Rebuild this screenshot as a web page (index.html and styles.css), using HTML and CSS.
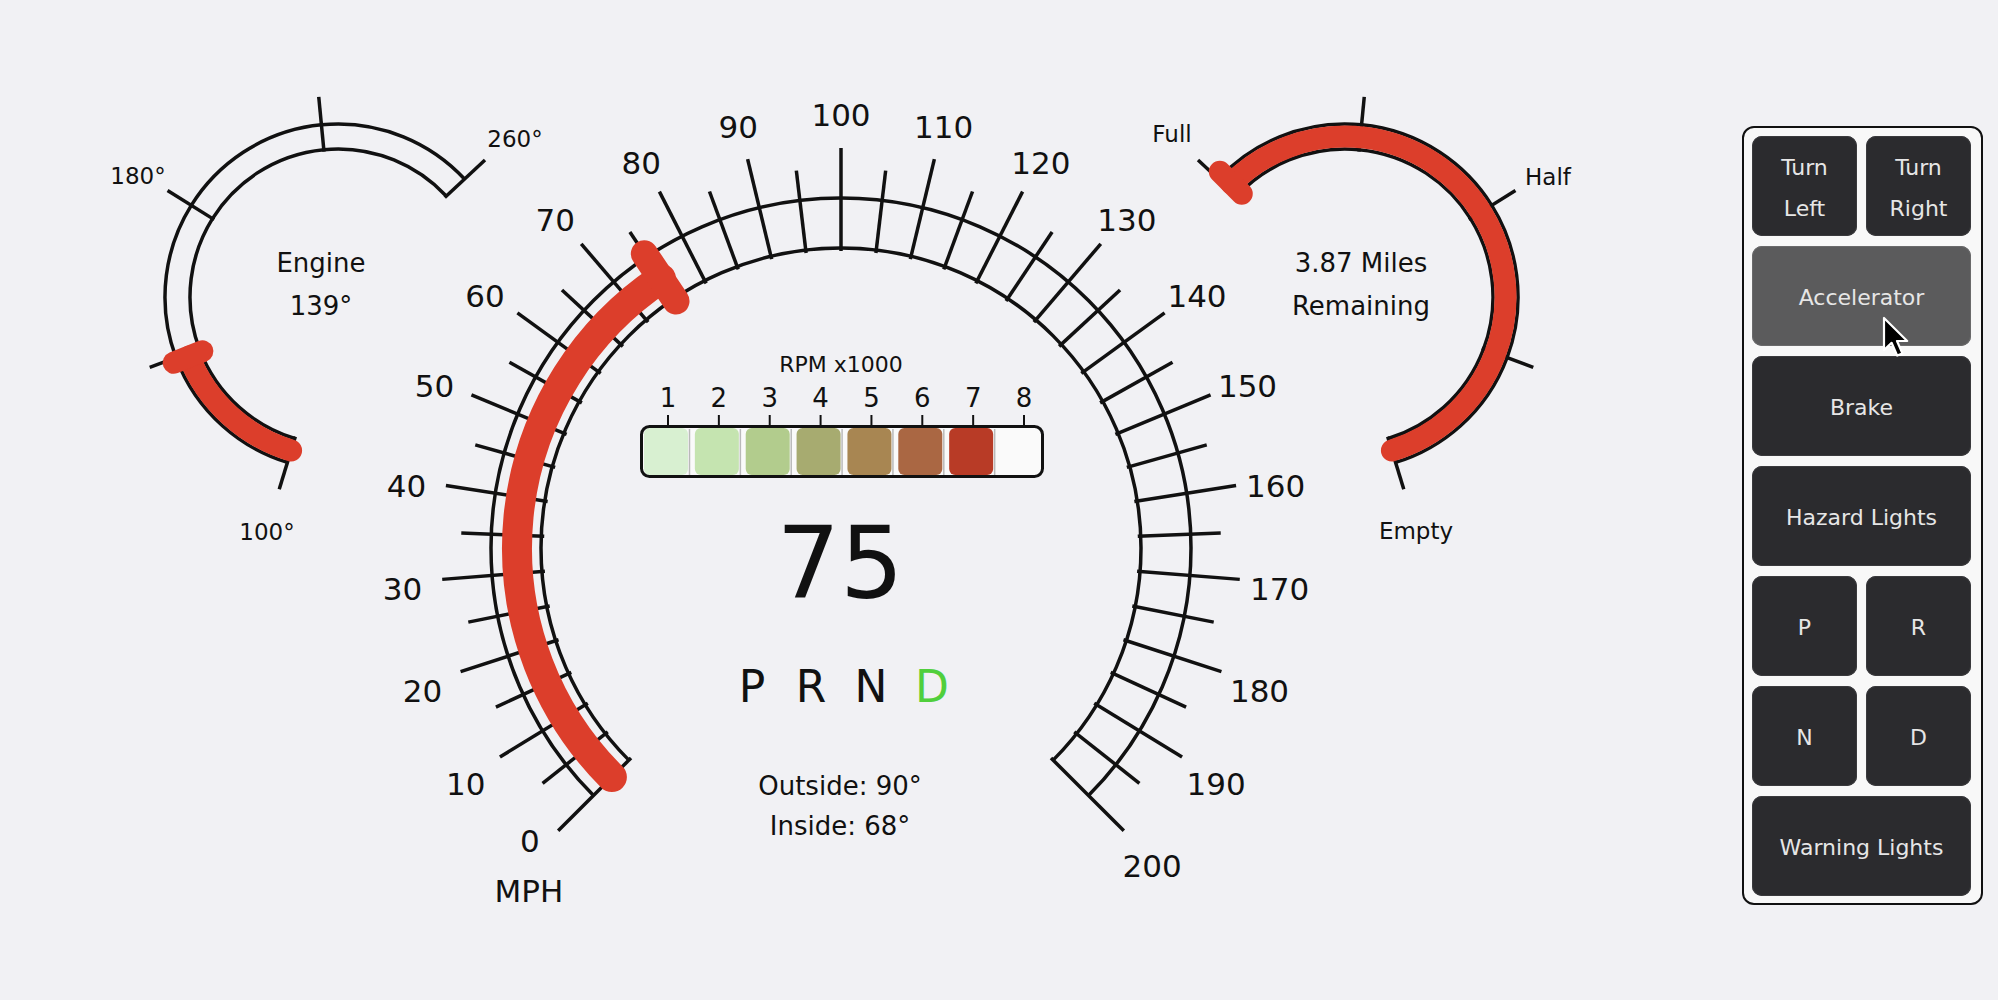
FILE: index.html
```html
<!DOCTYPE html>
<html lang="en">
<head>
<meta charset="utf-8">
<title>Car Dashboard</title>
<link rel="stylesheet" href="styles.css">
</head>
<body>
<div class="app">
  <svg class="dash" id="dash" width="1742" height="1000" viewBox="0 0 1742 1000">
    <g id="engine"></g>
    <g id="fuel"></g>
    <g id="speed"></g>
    <g id="speed-labels"></g>
    <g id="rpm"></g>

    <text class="t t-label" x="321" y="272">Engine</text>
    <text class="t t-label" x="321" y="315">139°</text>
    <text class="t t-small" x="138" y="184">180°</text>
    <text class="t t-small" x="515" y="147">260°</text>
    <text class="t t-small" x="267" y="540">100°</text>

    <text class="t t-label" x="1361" y="272">3.87 Miles</text>
    <text class="t t-label" x="1361" y="315">Remaining</text>
    <text class="t t-small" x="1172" y="142">Full</text>
    <text class="t t-small" x="1548" y="185">Half</text>
    <text class="t t-small" x="1416" y="539">Empty</text>

    <text class="t t-rpm-title" x="841" y="372">RPM x1000</text>
    <text class="t t-speed" x="840" y="598">75</text>
    <text class="t t-gear" x="752" y="702">P</text>
    <text class="t t-gear" x="811" y="702">R</text>
    <text class="t t-gear" x="871" y="702">N</text>
    <text class="t t-gear gear-on" x="932" y="702">D</text>
    <text class="t t-label" x="840" y="795">Outside: 90°</text>
    <text class="t t-label" x="840" y="835">Inside: 68°</text>
    <text class="t t-mph" x="529" y="902">MPH</text>
  </svg>

  <div class="panel">
    <div class="btn">Turn<br>Left</div>
    <div class="btn">Turn<br>Right</div>
    <div class="btn wide active">Accelerator</div>
    <div class="btn wide">Brake</div>
    <div class="btn wide">Hazard Lights</div>
    <div class="btn">P</div>
    <div class="btn">R</div>
    <div class="btn">N</div>
    <div class="btn">D</div>
    <div class="btn wide">Warning Lights</div>
  </div>
</div>

<svg class="cursor" width="30" height="44" viewBox="0 0 15 22">
  <path d="M1 1 L1 17 L4.8 13.4 L7.6 19.8 L10.2 18.7 L7.5 12.5 L12.6 12.5 Z" class="cursor-arrow"/>
</svg>

<script src="script.js"></script>
</body>
</html>
```

FILE: styles.css
```css
html, body {
  margin: 0;
  padding: 0;
}

body {
  width: 1998px;
  height: 1000px;
  overflow: hidden;
  background: #f1f1f4;
  font-family: "DejaVu Sans", Verdana, sans-serif;
  position: relative;
}

.app {
  display: flex;
  align-items: flex-start;
}

.dash {
  display: block;
  flex: none;
}

/* gauge drawing */
.ring {
  fill: none;
  stroke: #111;
  stroke-width: 3.5;
}

.tick {
  stroke: #111;
  stroke-width: 3.5;
}

.needle {
  fill: none;
  stroke: #dc3e2b;
  stroke-linecap: round;
}

.needle-main { stroke-width: 30; }
.needle-cap { stroke-width: 27; }
.needle-sm { stroke-width: 22; }

.rpm-back {
  fill: #fafafa;
  stroke: none;
}

.rpm-frame {
  fill: none;
  stroke: #111;
  stroke-width: 3;
}

.rpm-gap {
  stroke: #b9b9b9;
  stroke-width: 1.5;
}

.rpm-tick {
  stroke: #111;
  stroke-width: 2;
}

/* text */
.t {
  font-family: "DejaVu Sans", Verdana, sans-serif;
  fill: #111;
  text-anchor: middle;
}

.t-scale { font-size: 31px; }
.t-small { font-size: 23px; }
.t-label { font-size: 26px; }
.t-rpm-title { font-size: 22px; }
.t-rpm-num { font-size: 26px; }
.t-speed { font-size: 100px; }
.t-gear { font-size: 44px; }
.t-mph { font-size: 31px; }
.gear-on { fill: #50cf3c; }

/* control panel */
.panel {
  margin-top: 126px;
  width: 219px;
  padding: 8px 10px 7px 8px;
  border: 2px solid #111;
  border-radius: 12px;
  background: #f8f8f8;
  display: grid;
  grid-template-columns: 1fr 1fr;
  grid-auto-rows: 100px;
  gap: 10px 9px;
  flex: none;
}

.btn {
  display: flex;
  align-items: center;
  justify-content: center;
  text-align: center;
  padding-top: 3px;
  box-sizing: border-box;
  border-radius: 10px;
  background: #2b2b2e;
  color: #e6e6e6;
  font-family: "DejaVu Sans", Verdana, sans-serif;
  font-size: 22px;
  line-height: 41px;
  box-shadow: inset 0 0 0 1px #3a3a3d;
}

.wide {
  grid-column: span 2;
}

.active {
  background: #5b5b5c;
  box-shadow: inset 0 0 0 1px #6a6a6b;
}

.cursor {
  position: absolute;
  left: 1882px;
  top: 316px;
}

.cursor-arrow {
  fill: #000;
  stroke: #fff;
  stroke-width: 1.1;
  stroke-linejoin: round;
}
```

FILE: script.js
```js
(function () {
  var NS = 'http://www.w3.org/2000/svg';

  function el(parent, tag, attrs, cls, text) {
    var e = document.createElementNS(NS, tag);
    for (var k in attrs) e.setAttribute(k, attrs[k]);
    if (cls) e.setAttribute('class', cls);
    if (text != null) e.textContent = text;
    parent.appendChild(e);
    return e;
  }

  function pt(cx, cy, r, deg) {
    var a = deg * Math.PI / 180;
    return [cx + r * Math.cos(a), cy - r * Math.sin(a)];
  }

  /* arc drawn clockwise on screen from math-angle a0 down to a1 (a0 > a1) */
  function arc(cx, cy, r, a0, a1) {
    var p0 = pt(cx, cy, r, a0), p1 = pt(cx, cy, r, a1);
    var large = (a0 - a1) > 180 ? 1 : 0;
    return 'M' + p0[0].toFixed(2) + ' ' + p0[1].toFixed(2) +
      ' A' + r + ' ' + r + ' 0 ' + large + ' 1 ' +
      p1[0].toFixed(2) + ' ' + p1[1].toFixed(2);
  }

  function radial(g, cx, cy, deg, r0, r1, cls) {
    var a = pt(cx, cy, r0, deg), b = pt(cx, cy, r1, deg);
    return el(g, 'line', {
      x1: a[0].toFixed(2), y1: a[1].toFixed(2),
      x2: b[0].toFixed(2), y2: b[1].toFixed(2)
    }, cls);
  }

  /* ---- speedometer ---- */
  var S = document.getElementById('speed');
  var cx = 841, cy = 548;
  el(S, 'path', { d: arc(cx, cy, 350, 225, -45) }, 'ring');
  el(S, 'path', { d: arc(cx, cy, 300, 225, -45) }, 'ring');
  for (var v = 0; v <= 200; v += 5) {
    radial(S, cx, cy, 225 - 1.35 * v, 297, v % 10 === 0 ? 400 : 380, 'tick');
  }
  var speed = 75, sDeg = 225 - 1.35 * speed;
  el(S, 'path', { d: arc(cx, cy, 324, 225, sDeg) }, 'needle needle-main');
  radial(S, cx, cy, sDeg, 297, 354, 'needle needle-cap');

  var L = document.getElementById('speed-labels');
  for (v = 0; v <= 200; v += 10) {
    var p = pt(cx, cy, 440, 225 - 1.35 * v);
    var y = p[1] + 6;
    if (v === 0) y = 840;
    el(L, 'text', { x: p[0].toFixed(1), y: (y + 11.5).toFixed(1) }, 't t-scale', String(v));
  }

  /* ---- small gauges ---- */
  function smallGauge(id, gx, gy, a0, a1, ticks, redFrom, redTo, capDeg) {
    var g = document.getElementById(id);
    el(g, 'path', { d: arc(gx, gy, 173, a0, a1) }, 'ring');
    el(g, 'path', { d: arc(gx, gy, 148, a0, a1) }, 'ring');
    ticks.forEach(function (d) { radial(g, gx, gy, d, 146, 201, 'tick'); });
    el(g, 'path', { d: arc(gx, gy, 160.5, redFrom, redTo) }, 'needle needle-sm');
    radial(g, gx, gy, capDeg, 146, 177, 'needle needle-sm');
  }

  var engDeg = 253 - 210 * (139 - 100) / 160;
  smallGauge('engine', 338, 297, 253, 43, [253, 200.5, 148, 95.5, 43], 253, engDeg, engDeg);
  smallGauge('fuel', 1345, 297, 137, -73, [137, 84.5, 32, -20.5, -73], 135, -73, 135);

  /* ---- RPM bar ---- */
  var R = document.getElementById('rpm');
  var colors = ['#d8f0d1', '#c5e4b0', '#b2cc8d', '#a7ab70', '#a88652', '#aa6743', '#b83b26'];
  var step = 50.86;
  el(R, 'rect', { x: 641.5, y: 426.5, width: 401, height: 50, rx: 8 }, 'rpm-back');
  colors.forEach(function (c, i) {
    el(R, 'rect', { x: (644 + i * step).toFixed(2), y: 428, width: 44, height: 47, rx: 6, fill: c });
    var gx = 644 + i * step + 45.5;
    el(R, 'line', { x1: gx.toFixed(2), y1: 429, x2: gx.toFixed(2), y2: 475 }, 'rpm-gap');
  });
  el(R, 'rect', { x: 641.5, y: 426.5, width: 401, height: 50, rx: 8 }, 'rpm-frame');
  for (var i = 0; i < 8; i++) {
    var tx = 668 + i * step;
    el(R, 'line', { x1: tx.toFixed(2), y1: 415, x2: tx.toFixed(2), y2: 427 }, 'rpm-tick');
    el(R, 'text', { x: tx.toFixed(2), y: 407 }, 't t-rpm-num', String(i + 1));
  }
})();
```
